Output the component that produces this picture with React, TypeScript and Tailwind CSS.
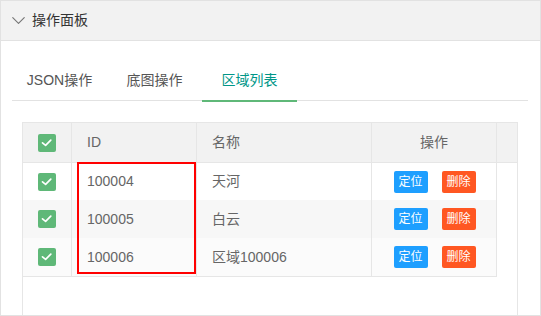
import { ChevronDown } from "lucide-react";

const rows = [
  { id: "100004", name: "天河", cls: "h-[37px] bg-white" },
  { id: "100005", name: "白云", cls: "h-[38px] bg-[#f7f7f7]" },
  { id: "100006", name: "区域100006", cls: "h-[39px] border-b border-[#e6e6e6] bg-[#fbfbfb]" },
];

function Check() {
  return (
    <span className="flex h-[18px] w-[18px] items-center justify-center rounded-[2px] bg-[#5fb878]">
      <svg width="18" height="18" viewBox="0 0 18 18" fill="none">
        <path d="M4.5 8.8 L7.6 11.3 L12.8 6.2" stroke="white" strokeWidth="1.7" strokeLinecap="round" strokeLinejoin="round" />
      </svg>
    </span>
  );
}

export default function App() {
  return (
    <div
      className="flex h-[316px] w-[541px] flex-col overflow-hidden border border-[#e2e2e2] bg-white text-[14px]"
      style={{ fontFamily: '"Liberation Sans", "Noto Sans CJK SC", sans-serif' }}
    >
      {/* Panel header */}
      <div className="flex h-[40px] shrink-0 items-center border-b border-[#e2e2e2] bg-[#f2f2f2] pl-[6px] text-[#333]">
        <ChevronDown className="h-[23px] w-[23px] text-[#777]" strokeWidth={1.2} />
        <span className="ml-[2px]">操作面板</span>
      </div>

      <div className="flex min-h-0 flex-1 flex-col pl-[11px] pr-[12px] pt-[20px]">
        {/* Tabs */}
        <div className="flex h-[40px] shrink-0 border-b border-[#e2e2e2]">
          <div className="flex w-[95px] items-center justify-center text-[#555]">JSON操作</div>
          <div className="flex w-[95px] items-center justify-center text-[#555]">底图操作</div>
          <div className="relative flex w-[95px] items-center justify-center text-[#009688]">
            区域列表
            <span className="absolute bottom-[-2px] left-0 h-[2px] w-full bg-[#5fb878]" />
          </div>
        </div>

        {/* Table */}
        <div className="relative ml-[10px] mt-[21px] flex min-h-0 w-[496px] flex-1 flex-col border-x border-t border-[#e6e6e6] text-[#666]">
          <div className="flex h-[40px] shrink-0 border-b border-[#e6e6e6] bg-[#f2f2f2]">
            <div className="flex w-[49px] items-center justify-center border-r border-[#e6e6e6]">
              <Check />
            </div>
            <div className="flex w-[125px] items-center border-r border-[#e6e6e6] px-[15px]">ID</div>
            <div className="flex w-[175px] items-center border-r border-[#e6e6e6] px-[15px]">名称</div>
            <div className="flex w-[125px] items-center justify-center border-r border-[#e6e6e6]">操作</div>
            <div className="flex-1" />
          </div>

          <div className="flex w-[474px] flex-col">
            {rows.map((r) => (
              <div key={r.id} className={`flex ${r.cls}`}>
                <div className="flex w-[49px] items-center justify-center border-r border-[#e6e6e6]">
                  <Check />
                </div>
                <div className="flex w-[125px] items-center border-r border-[#e6e6e6] px-[15px]">{r.id}</div>
                <div className="flex w-[175px] items-center border-r border-[#e6e6e6] px-[15px]">{r.name}</div>
                <div className="flex w-[125px] items-center justify-center gap-[14px] border-r border-[#e6e6e6] pl-[1px] text-[12px] text-white">
                  <span className="flex h-[22px] w-[34px] items-center justify-center rounded-[2px] bg-[#1e9fff]">定位</span>
                  <span className="flex h-[22px] w-[34px] items-center justify-center rounded-[2px] bg-[#ff5722]">删除</span>
                </div>
              </div>
            ))}
          </div>

          {/* highlight box */}
          <div className="absolute left-[54px] top-[39px] h-[112px] w-[119px] border-2 border-[#ff0000]" />
        </div>
      </div>
    </div>
  );
}
